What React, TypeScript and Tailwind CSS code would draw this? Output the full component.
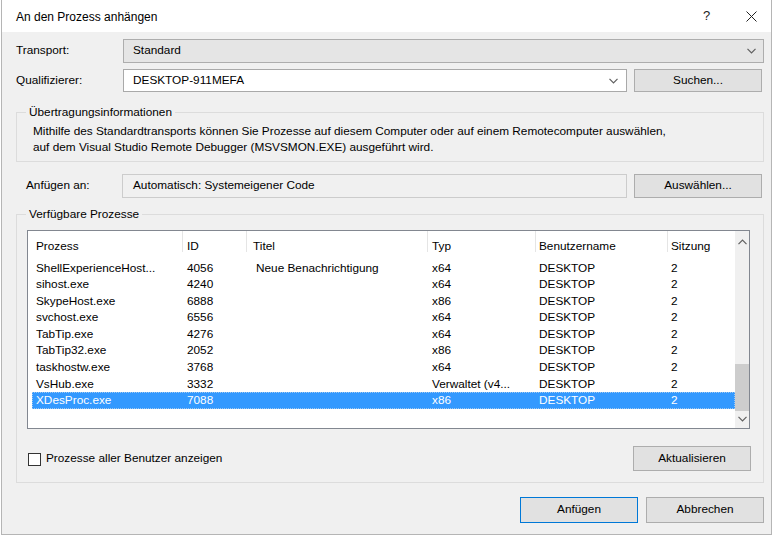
import React from "react";

const rows = [
  ["ShellExperienceHost...", "4056", "Neue Benachrichtigung", "x64", "DESKTOP", "2"],
  ["sihost.exe", "4240", "", "x64", "DESKTOP", "2"],
  ["SkypeHost.exe", "6888", "", "x86", "DESKTOP", "2"],
  ["svchost.exe", "6556", "", "x64", "DESKTOP", "2"],
  ["TabTip.exe", "4276", "", "x64", "DESKTOP", "2"],
  ["TabTip32.exe", "2052", "", "x86", "DESKTOP", "2"],
  ["taskhostw.exe", "3768", "", "x64", "DESKTOP", "2"],
  ["VsHub.exe", "3332", "", "Verwaltet (v4...", "DESKTOP", "2"],
  ["XDesProc.exe", "7088", "", "x86", "DESKTOP", "2"],
];

function ChevronDown({ className = "" }: { className?: string }) {
  return (
    <svg width="9" height="6" viewBox="0 0 9 6" className={className}>
      <path d="M0.5 0.8 L4.5 4.8 L8.5 0.8" fill="none" stroke="#5f5f5f" strokeWidth="1.2" />
    </svg>
  );
}

function ChevronUp({ className = "" }: { className?: string }) {
  return (
    <svg width="9" height="6" viewBox="0 0 9 6" className={className}>
      <path d="M0.5 5.2 L4.5 1.2 L8.5 5.2" fill="none" stroke="#606060" strokeWidth="1.2" />
    </svg>
  );
}

export default function App() {
  return (
    <div className="w-[775px] h-[536px] bg-white font-['Liberation_Sans',Arial,sans-serif] text-[11.8px] text-black overflow-hidden">
      <div className="ml-[1px] w-[771px] h-[535px] border-l border-r border-b border-[#b5b5b5] flex flex-col">
        {/* Title bar */}
        <div className="h-[32px] bg-white flex items-center pl-[14px] pr-[14px] shrink-0">
          <span className="flex-1 pt-[1px] text-[12px]">An den Prozess anhängen</span>
          <span className="w-[10px] text-[13px] mr-[33px] text-[#222]">?</span>
          <svg width="11" height="11" viewBox="0 0 11 11">
            <path d="M0.5 0.5 L10.5 10.5 M10.5 0.5 L0.5 10.5" stroke="#222" strokeWidth="1" />
          </svg>
        </div>

        {/* Body */}
        <div className="flex-1 bg-[#f0f0f0] pl-[14px] pr-[7px]">
          {/* Transport */}
          <div className="mt-[7px] flex items-center h-[24px]">
            <div className="w-[107px]">Transport:</div>
            <div className="flex-1 h-[24px] bg-[#e5e5e5] border border-[#adadad] flex items-center pl-[9px] pr-[7px]">
              <span className="flex-1">Standard</span>
              <ChevronDown />
            </div>
          </div>

          {/* Qualifizierer */}
          <div className="mt-[6px] flex items-center h-[23px]">
            <div className="w-[107px]">Qualifizierer:</div>
            <div className="w-[504px] h-[23px] bg-white border border-[#a9a9a9] flex items-center pl-[9px] pr-[8px]">
              <span className="flex-1">DESKTOP-911MEFA</span>
              <ChevronDown />
            </div>
            <button className="ml-[7px] w-[128px] h-[23px] bg-[#e1e1e1] border border-[#adadad]">Suchen...</button>
          </div>

          {/* Übertragungsinformationen */}
          <fieldset className="mt-[12px] border border-[#dcdcdc] pb-[6px] pt-[3px]">
            <legend className="ml-[9px] px-[3px] leading-[16px]">Übertragungsinformationen</legend>
            <div className="leading-[16px] pl-[16px]">
              Mithilfe des Standardtransports können Sie Prozesse auf diesem Computer oder auf einem Remotecomputer auswählen,
              <br />
              auf dem Visual Studio Remote Debugger (MSVSMON.EXE) ausgeführt wird.
            </div>
          </fieldset>

          {/* Anfügen an */}
          <div className="mt-[12px] flex items-center h-[24px] pl-[10px]">
            <div className="w-[96px]">Anfügen an:</div>
            <div className="w-[505px] h-[24px] border border-[#cccccc] bg-[#f0f0f0] flex items-center pl-[10px]">
              Automatisch: Systemeigener Code
            </div>
            <button className="ml-[7px] w-[128px] h-[24px] bg-[#e1e1e1] border border-[#adadad]">Auswählen...</button>
          </div>

          {/* Verfügbare Prozesse */}
          <fieldset className="mt-[8px] border border-[#dcdcdc] pb-[11px]">
            <legend className="ml-[9px] px-[3px] leading-[16px]">Verfügbare Prozesse</legend>
            <div className="mt-[8px] ml-[10px] mr-[13px] h-[199px] bg-white border border-[#828790] flex">
              <div className="flex-1 flex flex-col">
                <div className="h-[23px] grid grid-cols-[154px_64px_181px_108px_132px_1fr]">
                  <div className="pl-[8px] pt-[7px]">Prozess</div>
                  <div className="pl-[4px] pt-[7px] h-[21px] border-l border-[#e5e5e5]">ID</div>
                  <div className="pl-[6px] pt-[7px] h-[21px] border-l border-[#e5e5e5]">Titel</div>
                  <div className="pl-[4px] pt-[7px] h-[21px] border-l border-[#e5e5e5]">Typ</div>
                  <div className="pl-[3px] pt-[7px] h-[21px] border-l border-[#e5e5e5]">Benutzername</div>
                  <div className="pl-[3px] pt-[7px] h-[21px] border-l border-[#e5e5e5]">Sitzung</div>
                </div>
                <div className="pt-[5.5px] pl-[4px]">
                  {rows.map((r, i) => {
                    const sel = i === rows.length - 1;
                    return (
                      <div
                        key={i}
                        className={
                          sel
                            ? "h-[16.6px] grid grid-cols-[150px_64px_181px_108px_132px_1fr] items-center bg-[#3399ff] text-white outline outline-1 outline-dotted outline-[#a0c8f0] -outline-offset-1"
                            : "h-[16.6px] grid grid-cols-[150px_64px_181px_108px_132px_1fr] items-center"
                        }
                      >
                        <div className="pl-[4px] whitespace-nowrap">{r[0]}</div>
                        <div className="pl-[5px]">{r[1]}</div>
                        <div className="pl-[10px] whitespace-nowrap">{r[2]}</div>
                        <div className="pl-[5px] whitespace-nowrap">{r[3]}</div>
                        <div className="pl-[4px]">{r[4]}</div>
                        <div className="pl-[4px]">{r[5]}</div>
                      </div>
                    );
                  })}
                </div>
              </div>
              {/* Scrollbar */}
              <div className="w-[14px] bg-[#f0f0f0] flex flex-col items-center">
                <div className="h-[17px] flex items-center justify-center pt-[4px]">
                  <ChevronUp />
                </div>
                <div className="flex-1 w-full flex flex-col justify-end">
                  <div className="h-[47px] w-full bg-[#cdcdcd] mb-[1px]" />
                </div>
                <div className="h-[16px] flex items-center justify-center pb-[2px]">
                  <ChevronDown />
                </div>
              </div>
            </div>

            <div className="mt-[17px] flex items-center h-[25px] pl-[11px] pr-[12px]">
              <div className="w-[13px] h-[13px] border border-[#333] bg-white mt-[1px]" />
              <span className="ml-[5px] flex-1">Prozesse aller Benutzer anzeigen</span>
              <button className="w-[118px] h-[25px] bg-[#e1e1e1] border border-[#adadad]">Aktualisieren</button>
            </div>
          </fieldset>

          {/* Bottom buttons */}
          <div className="mt-[14px] flex justify-end gap-[8px]">
            <button className="w-[118px] h-[26px] bg-[#e1e1e1] border border-[#0078d7]">Anfügen</button>
            <button className="w-[118px] h-[26px] bg-[#e1e1e1] border border-[#adadad]">Abbrechen</button>
          </div>
        </div>
      </div>
    </div>
  );
}
